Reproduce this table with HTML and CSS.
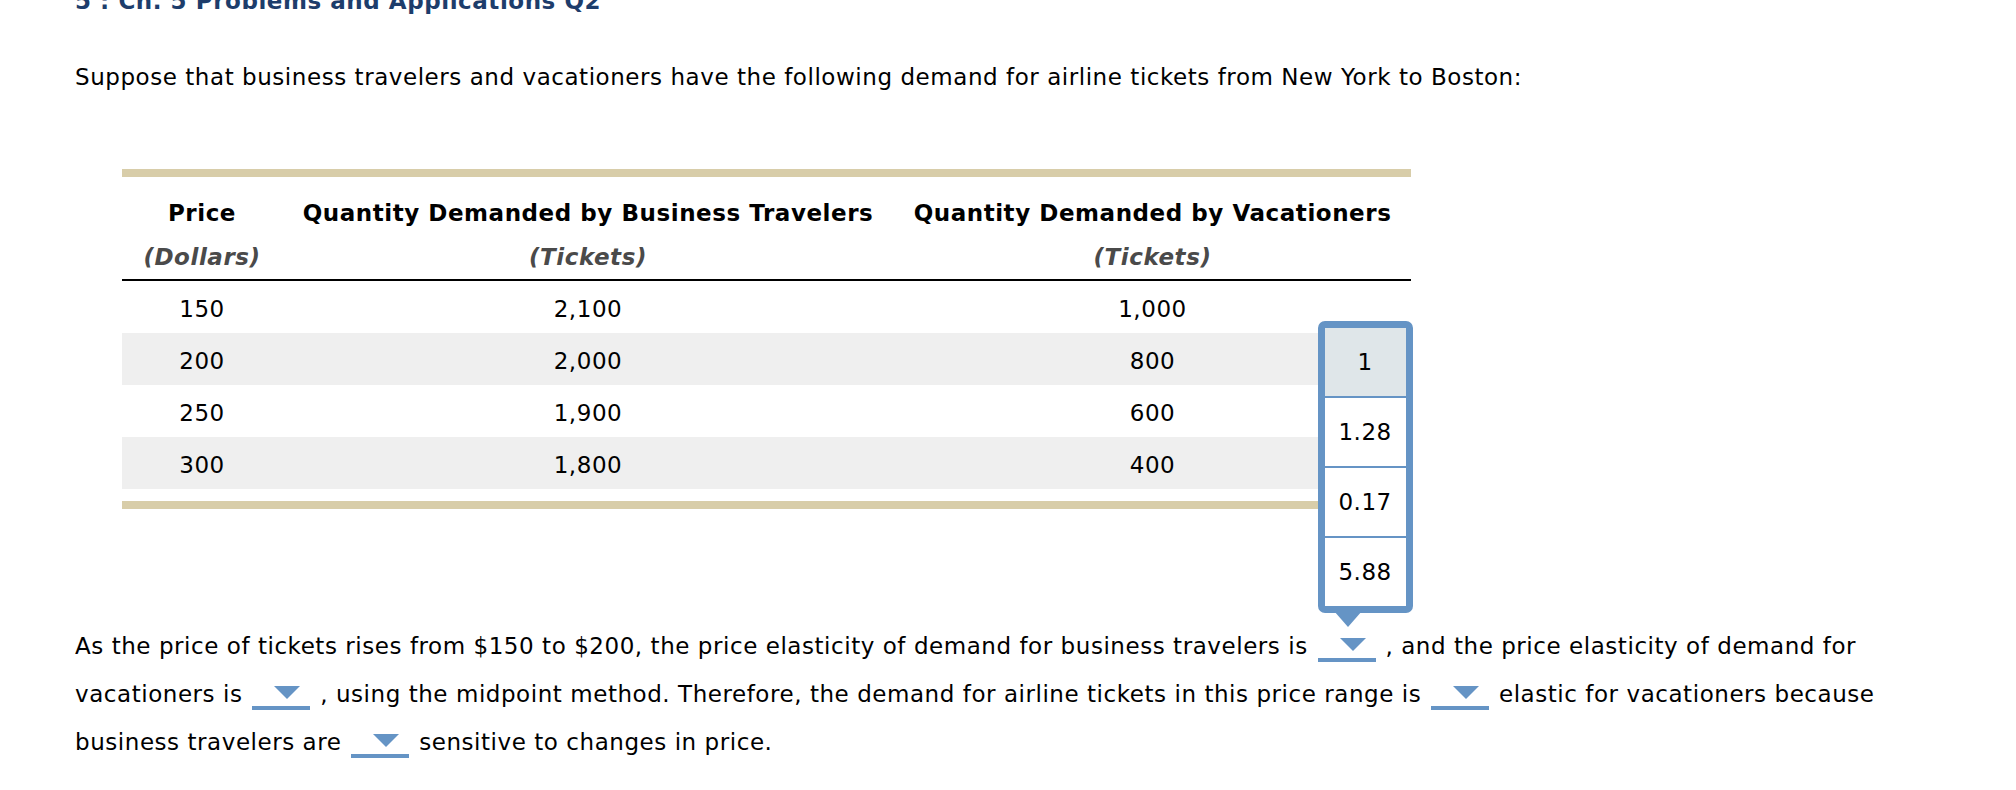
FILE: index.html
```html
<!DOCTYPE html>
<html>
<head>
<meta charset="utf-8">
<link rel="stylesheet" href="styles.css">
</head>
<body>
<div class="page">
  <h2 class="title">5 : Ch. 5 Problems and Applications Q2</h2>
  <p class="intro">Suppose that business travelers and vacationers have the following demand for airline tickets from New York to Boston:</p>

  <div class="table-wrap">
    <table class="demand">
      <colgroup>
        <col class="c1"><col class="c2"><col class="c3">
      </colgroup>
      <thead>
        <tr class="h1">
          <th>Price</th>
          <th>Quantity Demanded by Business Travelers</th>
          <th>Quantity Demanded by Vacationers</th>
        </tr>
        <tr class="h2">
          <th>(Dollars)</th>
          <th>(Tickets)</th>
          <th>(Tickets)</th>
        </tr>
      </thead>
      <tbody>
        <tr><td>150</td><td>2,100</td><td>1,000</td></tr>
        <tr class="alt"><td>200</td><td>2,000</td><td>800</td></tr>
        <tr><td>250</td><td>1,900</td><td>600</td></tr>
        <tr class="alt"><td>300</td><td>1,800</td><td>400</td></tr>
      </tbody>
    </table>
  </div>

  <p class="question">As the price of tickets rises from $150 to $200, the price elasticity of demand for business travelers is <span class="dd open"><span class="tri"></span><span class="menu"><span class="opt sel">1</span><span class="opt">1.28</span><span class="opt">0.17</span><span class="opt">5.88</span><span class="arrow"></span></span></span> , and the price elasticity of demand for<br>vacationers is <span class="dd"><span class="tri"></span></span> , using the midpoint method. Therefore, the demand for airline tickets in this price range is <span class="dd"><span class="tri"></span></span> elastic for vacationers because<br>business travelers are <span class="dd"><span class="tri"></span></span> sensitive to changes in price.</p>
</div>
</body>
</html>
```

FILE: styles.css
```css
html, body {
  margin: 0;
  padding: 0;
  background: #ffffff;
}

.page {
  padding-left: 75px;
  font-family: Verdana, "DejaVu Sans", sans-serif;
  font-size: 23px;
  letter-spacing: 0.55px;
  line-height: 26px;
  color: #000;
}

.title {
  margin: -12px 0 0 0;
  font-size: 23px;
  line-height: 26px;
  font-weight: bold;
  color: #1d3d6b;
}

.intro {
  margin: 50px 0 0 0;
}

.table-wrap {
  margin: 79px 0 0 47px;
  width: 1289px;
  border-top: 8px solid #d8cda9;
  border-bottom: 8px solid #d8cda9;
  padding-bottom: 12px;
}

.demand {
  width: 1289px;
  border-collapse: collapse;
  table-layout: fixed;
}

.c1 { width: 160px; }
.c2 { width: 612px; }
.c3 { width: 517px; }

.demand th {
  text-align: center;
  font-weight: bold;
  padding: 0 10px;
  white-space: nowrap;
}

.h1 th {
  padding-top: 23px;
  padding-bottom: 18px;
}

.h2 th {
  font-style: italic;
  color: #4a4a4a;
  padding-top: 0;
  padding-bottom: 9px;
  border-bottom: 2px solid #000;
}

.demand td {
  text-align: center;
  height: 26px;
  padding: 15px 10px 11px;
}

.demand tr.alt td {
  background: #efefef;
}

.question {
  margin: 113px 0 0 0;
  line-height: 48px;
}

.dd {
  position: relative;
  display: inline-block;
  width: 58px;
  height: 24px;
  border-bottom: 4px solid #6594c5;
  vertical-align: -8px;
  margin: 0 2px;
}

.tri {
  display: block;
  width: 0;
  height: 0;
  margin: 4px 0 0 22px;
  border-left: 13px solid transparent;
  border-right: 13px solid transparent;
  border-top: 13px solid #6594c5;
}

.menu {
  position: absolute;
  left: 0;
  bottom: calc(100% + 21px);
  width: 81px;
  display: flex;
  flex-direction: column;
  border: 7px solid #6594c5;
  border-radius: 7px;
  background: #fff;
  line-height: 26px;
  letter-spacing: 0.5px;
}

.opt {
  display: flex;
  align-items: center;
  justify-content: center;
  height: 68px;
  background: #fff;
  border-top: 2px solid #6594c5;
}

.opt:first-child {
  border-top: none;
}

.opt.sel {
  background: #dfe6e9;
}

.arrow {
  position: absolute;
  left: 9px;
  top: calc(100% + 5px);
  width: 0;
  height: 0;
  border-left: 14px solid transparent;
  border-right: 14px solid transparent;
  border-top: 16px solid #6594c5;
}
```
